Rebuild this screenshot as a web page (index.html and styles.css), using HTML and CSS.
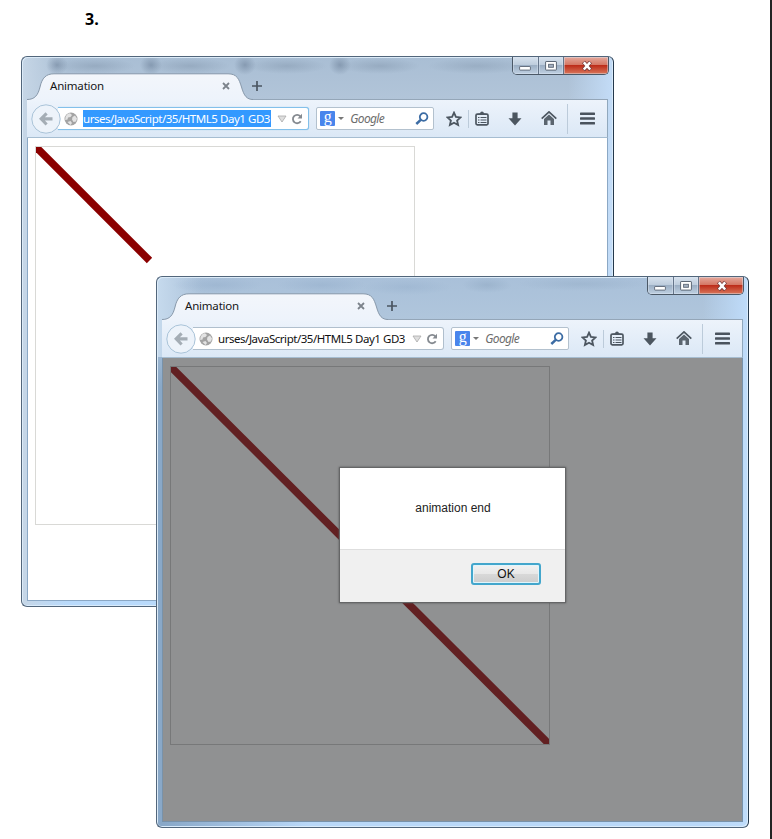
FILE: index.html
```html
<!DOCTYPE html>
<html lang="en">
<head>
<meta charset="utf-8">
<title>Animation</title>
<link rel="stylesheet" href="styles.css">
</head>
<body>
<svg width="0" height="0" class="defs">
  <defs>
    <linearGradient id="tabfill" x1="0" y1="0" x2="0" y2="1"><stop offset="0" stop-color="#f3f6fb"/><stop offset="1" stop-color="#edf3fb"/></linearGradient>
    <symbol id="tab" viewBox="0 0 226 28">
      <path d="M0 28V26.500C8 26.500 11 22 13 14C15 5 19 .8 27 .8H201C210 .8 212 6 214.500 14C217 23 220 26.500 226 26.500V28Z" fill="url(#tabfill)"/>
      <path d="M0 26.500C8 26.500 11 22 13 14C15 5 19 .8 27 .8H201C210 .8 212 6 214.500 14C217 23 220 26.500 226 26.500" fill="none" stroke="#8798aa"/>
    </symbol>
    <symbol id="x" viewBox="0 0 8 8"><path d="M1 1L7 7M7 1L1 7" stroke="#7c838b" stroke-width="1.800"/></symbol>
    <symbol id="plus" viewBox="0 0 12 12"><path d="M6 1V11M1 6H11" stroke="#4b5662" stroke-width="1.700"/></symbol>
    <symbol id="back" viewBox="0 0 30 30"><circle cx="15" cy="15" r="14.200" fill="#edf3fa" stroke="#a9c3d8"/><path d="M8 14.800L14.500 8.300L16.700 10.400L13.900 13.300H21.500V16.600H13.900L16.700 19.400L14.500 21.500Z" fill="#a4adb5"/></symbol>
    <symbol id="globe" viewBox="0 0 14 14"><circle cx="7" cy="7" r="6.500" fill="#a3a3a3"/><path d="M1.500 5Q3 1.500 6 1.300L8 3L6.500 5L4 5.500L3.500 7.500L1.200 8ZM8.500 5L11 3.500L13 6.500L12 9.500L9.500 10L8 7.500ZM3.500 10L6.500 9L8 11L6.500 13Z" fill="#e3e3e3"/></symbol>
    <symbol id="drop" viewBox="0 0 10 8"><path d="M1 1H9L5 7Z" fill="#dedede" stroke="#aaaaaa" stroke-width=".8"/></symbol>
    <symbol id="reload" viewBox="0 0 12 12"><path d="M9.300 3.300A4.200 4.200 0 1 0 9.700 8.300" fill="none" stroke="#858a90" stroke-width="1.800"/><path d="M6.500 5.600H11V.8Z" fill="#858a90"/></symbol>
    <symbol id="mag" viewBox="0 0 14 14"><circle cx="8.600" cy="5" r="3.800" fill="none" stroke="#3c6ca4" stroke-width="1.800"/><path d="M6 7.700L1.300 12" stroke="#3c6ca4" stroke-width="2.500"/></symbol>
    <symbol id="star" viewBox="0 0 16 16"><path d="M8 1.700L9.900 5.900L14.500 6.400L11.100 9.500L12.100 14L8 11.700L3.900 14L4.900 9.500L1.500 6.400L6.100 5.900Z" fill="none" stroke="#4c5660" stroke-width="1.800"/></symbol>
    <symbol id="clip" viewBox="0 0 14 15"><rect x="1" y="3.200" width="12" height="10.600" rx="1.300" fill="none" stroke="#4c5660" stroke-width="1.700"/><path d="M3.500 4V2.500H5Q5.200.4 7 .4T9 2.500H10.500V4Z" fill="#4c5660"/><path d="M3 6.500H4.500M3 9H4.500M3 11.500H4.500M5.500 6.500H11.500M5.500 9H11.500M5.500 11.500H11.500" stroke="#4c5660" stroke-width="1.200"/></symbol>
    <symbol id="down" viewBox="0 0 14 14"><path d="M4.400.5H9.600V6.300H13.500L7 13.500L.5 6.300H4.400Z" fill="#4c5660"/></symbol>
    <symbol id="home" viewBox="0 0 16 15"><path d="M.7 7.700L8 .9L15.300 7.700" fill="none" stroke="#4c5660" stroke-width="1.700"/><path d="M3 8L8 3.500L13 8V14H9.500V9.500H6.500V14H3Z" fill="#5b656f"/></symbol>
    <symbol id="menu" viewBox="0 0 15 13"><path d="M1 1.800H14M1 6.500H14M1 11.200H14" stroke="#4a535d" stroke-width="2.600" stroke-linecap="round"/></symbol>
    <symbol id="wmin" viewBox="0 0 12 12"><rect x=".6" y="6.500" width="10.800" height="3.600" rx=".5" fill="#fff" stroke="#5c6775" stroke-width=".9"/></symbol>
    <symbol id="wmax" viewBox="0 0 12 12"><rect x=".6" y="1.500" width="10.800" height="8.600" rx=".5" fill="#fff" stroke="#5c6775"/><rect x="3.600" y="4.300" width="4.800" height="3" fill="#a5b2c2" stroke="#5c6775" stroke-width=".9"/></symbol>
    <symbol id="wclose" viewBox="0 0 12 12"><path d="M2.500 2L9.500 9.800M9.500 2L2.500 9.800" stroke="#733c3c" stroke-width="4"/><path d="M2.800 2.300L9.200 9.500M9.200 2.300L2.800 9.500" stroke="#fff" stroke-width="2.500"/></symbol>
  </defs>
</svg>
<main class="page">
  <h1 class="number">3.</h1>

  <section class="window first">
    <header class="strip">
      <div class="tab"><svg class="shape"><use href="#tab"/></svg><span class="title">Animation</span><svg class="i-x"><use href="#x"/></svg></div>
      <svg class="i-plus"><use href="#plus"/></svg>
      <div class="controls"><i><svg><use href="#wmin"/></svg></i><i><svg><use href="#wmax"/></svg></i><i class="close"><svg><use href="#wclose"/></svg></i></div>
    </header>
    <nav class="bar">
      <svg class="i-back"><use href="#back"/></svg>
      <div class="url focus"><svg class="i-globe"><use href="#globe"/></svg><span class="address">urses/JavaScript/35/HTML5 Day1 GD3</span><svg class="i-drop"><use href="#drop"/></svg><svg class="i-reload"><use href="#reload"/></svg></div>
      <div class="search"><b class="g">g</b><span class="caret"></span><em>Google</em><svg class="i-mag"><use href="#mag"/></svg></div>
      <div class="tools"><svg class="i-star"><use href="#star"/></svg><span class="sep"></span><svg class="i-clip"><use href="#clip"/></svg><svg class="i-down"><use href="#down"/></svg><svg class="i-home"><use href="#home"/></svg><span class="sep tall"></span><svg class="i-menu"><use href="#menu"/></svg></div>
    </nav>
    <div class="view"><svg class="canvas" viewBox="0 0 378 377"><path d="M0 0L113.500 113.500" stroke="#8b0000" stroke-width="7.500"/></svg></div>
  </section>

  <section class="window second">
    <header class="strip">
      <div class="tab"><svg class="shape"><use href="#tab"/></svg><span class="title">Animation</span><svg class="i-x"><use href="#x"/></svg></div>
      <svg class="i-plus"><use href="#plus"/></svg>
      <div class="controls"><i><svg><use href="#wmin"/></svg></i><i><svg><use href="#wmax"/></svg></i><i class="close"><svg><use href="#wclose"/></svg></i></div>
    </header>
    <nav class="bar">
      <svg class="i-back"><use href="#back"/></svg>
      <div class="url"><svg class="i-globe"><use href="#globe"/></svg><span class="address">urses/JavaScript/35/HTML5 Day1 GD3</span><svg class="i-drop"><use href="#drop"/></svg><svg class="i-reload"><use href="#reload"/></svg></div>
      <div class="search"><b class="g">g</b><span class="caret"></span><em>Google</em><svg class="i-mag"><use href="#mag"/></svg></div>
      <div class="tools"><svg class="i-star"><use href="#star"/></svg><span class="sep"></span><svg class="i-clip"><use href="#clip"/></svg><svg class="i-down"><use href="#down"/></svg><svg class="i-home"><use href="#home"/></svg><span class="sep tall"></span><svg class="i-menu"><use href="#menu"/></svg></div>
    </nav>
    <div class="view"><svg class="canvas" viewBox="0 0 378 377"><path d="M0 0L378 377" stroke="#622022" stroke-width="7.500"/></svg></div>
    <div class="dialog" role="dialog"><p>animation end</p><footer><button>OK</button></footer></div>
  </section>
</main>
</body>
</html>
```

FILE: styles.css
```css
* { box-sizing: border-box; }
body { margin: 0; background: #fff; }
svg { display: block; flex: none; }
.defs { position: absolute; }
.page { position: relative; width: 772px; height: 839px; overflow: hidden; border-right: 2px solid #232323; }
.number { margin: 0; padding: 9px 0 0 85px; font: 700 16px/20px "Open Sans", sans-serif; color: #000; }

.window {
  position: absolute; width: 593px; height: 552px; padding: 0 5px 5px;
  display: flex; flex-direction: column;
  border: 1px solid #52667b; border-right-color: #25394c; border-radius: 6px;
  background:
    radial-gradient(ellipse 11px 10px at 35px 8px, #7488a0aa, transparent),
    radial-gradient(ellipse 40px 8px at 73px 9px, #8094aa77, transparent),
    radial-gradient(ellipse 11px 10px at 129px 8px, #7488a0aa, transparent),
    radial-gradient(ellipse 40px 8px at 168px 9px, #8094aa77, transparent),
    radial-gradient(ellipse 11px 10px at 223px 8px, #7488a0aa, transparent),
    radial-gradient(ellipse 40px 8px at 265px 9px, #8094aa77, transparent),
    radial-gradient(ellipse 11px 10px at 318px 8px, #7488a0aa, transparent),
    radial-gradient(ellipse 40px 8px at 358px 9px, #8094aa77, transparent),
    radial-gradient(ellipse 50px 8px at 455px 9px, #8094aa66, transparent),
    linear-gradient(90deg, #c6d6e6 0, transparent 45px),
    linear-gradient(270deg, #c3dcf7 0, transparent 45px),
    linear-gradient(180deg, #a9bed4 0, #b2c5d9 44px, #c2d9ef 90px, #b5d7fa 230px, #b9dafb 100%);
  box-shadow: inset 1px 1px 0 #dcebf8, inset -1px -1px 0 #d9ebfb;
  font-family: "Noto Sans", sans-serif; font-size: 12px;
}
.first { left: 21px; top: 56px; height: 551px; }
.second {
  left: 156px; top: 276px;
  background:
    radial-gradient(ellipse 45px 8px at 60px 8px, #93adca77, transparent),
    radial-gradient(ellipse 45px 8px at 165px 8px, #93adca77, transparent),
    radial-gradient(ellipse 45px 8px at 250px 10px, #93adca66, transparent),
    radial-gradient(ellipse 25px 8px at 330px 8px, #8ca5bf77, transparent),
    radial-gradient(ellipse 65px 7px at 425px 7px, #8ca5bf55, transparent),
    linear-gradient(90deg, #c6daed 0, transparent 45px) 0 0/100% 80px no-repeat,
    linear-gradient(270deg, #bfdcfa 0, transparent 45px),
    linear-gradient(180deg, #a9c0d9 0, #b0c6dc 44px, transparent 110px),
    linear-gradient(90deg, #89a8c8 0, #89a8c8 6px, #b9d8f8 150px);
}

.strip { position: relative; z-index: 1; display: flex; height: 42px; flex: none; }
.tab { position: relative; display: flex; width: 226px; height: 27px; margin-top: 16px; padding: 0 23px 1px 23px; align-items: center; justify-content: space-between; }
.shape { position: absolute; left: 0; top: 0; width: 226px; height: 28px; }
.title { position: relative; line-height: 16px; color: #161616; font-size: 11.5px; letter-spacing: -.2px; }
.i-x { position: relative; width: 8px; height: 8px; }
.i-plus { width: 12px; height: 12px; margin: 23px 0 0 -2px; }
.controls { display: flex; width: 97px; height: 18px; margin-left: auto; margin-right: -1px; border: 1px solid #4b5866; border-top: 0; border-radius: 0 0 5px 5px; overflow: hidden; }
.controls i { width: 26px; display: flex; align-items: center; justify-content: center; border-right: 1px solid #65758a; background: linear-gradient(#d7e2ee 0, #bdccdc 47%, #9cafc4 50%, #bfd0e2 100%); box-shadow: inset 0 0 0 1px #dfe9f470; }
.controls .close { width: 44px; padding-left: 2px; border: 0; background: linear-gradient(#e5a99c 0, #d47663 47%, #bd2d1a 50%, #d9775b 100%); }
.controls svg { width: 12px; height: 12px; }

.bar { display: flex; flex: none; height: 39px; align-items: center; padding: 0 12px 0 4px; border: 1px solid #90a8bd; border-width: 1px 1px 1px 0; border-top-color: #94a6b8; border-bottom-color: #a6bdd1; background: linear-gradient(#edf3fb, #dbe8f6); }
.i-back { position: relative; width: 30px; height: 30px; z-index: 1; }
.url { display: flex; align-items: center; width: 252px; height: 23px; margin-left: -3px; padding: 0 5px 0 6px; border: 1px solid #b0bfcd; border-left: 0; border-radius: 0 3px 3px 0; background: #fff; }
.focus { border-color: #83c0ea; box-shadow: 0 0 1px #83c0ea; }
.i-globe { width: 14px; height: 14px; }
.address { width: 188px; height: 17px; margin-left: 5px; white-space: nowrap; font-size: 11.5px; line-height: 17px; letter-spacing: -.46px; color: #111; }
.focus .address { background: #3399ff; color: #fff; }
.i-drop { width: 10px; height: 8px; margin-left: 6px; }
.i-reload { width: 12px; height: 12px; margin-left: auto; }
.search { display: flex; align-items: center; width: 118px; height: 23px; margin-left: 7px; padding: 0 4px 0 3px; border: 1px solid #b3c1ce; border-radius: 2px; background: #fff; }
.g { width: 15px; height: 15px; border-radius: 1px; background: #4985ec; color: #fff; font: 16px/12px "Liberation Serif", serif; text-align: center; }
.caret { width: 5px; border: 3px solid transparent; border-top-color: #777; border-bottom: 0; margin: 0 6px 0 3px; }
.search em { color: #6d6d6d; line-height: 16px; letter-spacing: -.65px; }
.i-mag { width: 14px; height: 14px; margin-left: auto; }
.tools { display: flex; align-items: center; margin-left: 12px; flex: 1; }
.i-star { width: 16px; height: 16px; }
.sep { width: 1px; height: 18px; margin-left: 6px; background: #bccbda; }
.i-clip { width: 14px; height: 15px; margin-left: 6px; }
.i-down { width: 14px; height: 14px; margin-left: 19px; }
.i-home { width: 16px; height: 15px; margin-left: 19px; }
.tall { height: 30px; margin-left: 10px; }
.i-menu { width: 15px; height: 13px; margin-left: 12px; }

.view { flex: 1; padding: 8px 7px; background: #fff; border: 1px solid #8ba8c5; border-top: 0; }
.canvas { width: 380px; height: 379px; border: 1px solid #d9d9d6; }
.second .view { background: #909192; border-color: #7892aa; }
.second .canvas { border-color: #777879; }

.dialog { position: absolute; left: 182px; top: 190px; width: 227px; height: 136px; display: flex; flex-direction: column; border: 1px solid #656667; background: #fff; font: 12px "Liberation Sans", Arial, sans-serif; box-shadow: 0 0 2px #555; }
.dialog p { flex: 1; margin: 0; padding-left: 1px; line-height: 81px; text-align: center; color: #222; }
.dialog footer { height: 53px; display: flex; justify-content: flex-end; padding: 13px 24px 0 0; border-top: 1px solid #dedede; background: #f0f0f0; }
.dialog button { width: 70px; height: 22px; padding: 0; border: 2px solid #43a6cc; border-radius: 3px; background: linear-gradient(#f1f1f1 0, #e8e8e8 48%, #d8d8d8 52%, #cdcdcd 100%); box-shadow: inset 0 0 0 1px #e0f5fc; font: 12px "Liberation Sans", Arial, sans-serif; color: #111; }
```
